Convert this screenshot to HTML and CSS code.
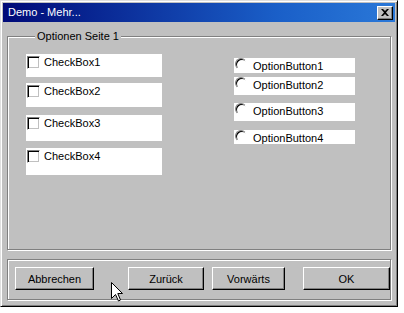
FILE: index.html
```html
<!DOCTYPE html>
<html>
<head>
<meta charset="utf-8">
<link rel="stylesheet" href="styles.css">
</head>
<body>
<div class="window">
  <div class="titlebar">
    <span class="title">Demo - Mehr...</span>
    <span class="close">
      <svg width="8" height="7" viewBox="0 0 8 7"><path d="M0 0h2l2 2 2-2h2L5 3.5 8 7H6L4 5 2 7H0l3-3.5z" fill="#000"/></svg>
    </span>
  </div>
  <div class="client">
    <fieldset class="group">
      <legend>Optionen Seite 1</legend>
      <div class="cols">
        <div class="col-left">
          <div class="cb h1"><span class="box"></span><span class="lbl">CheckBox1</span></div>
          <div class="cb h2"><span class="box"></span><span class="lbl">CheckBox2</span></div>
          <div class="cb h3"><span class="box"></span><span class="lbl">CheckBox3</span></div>
          <div class="cb h4"><span class="box"></span><span class="lbl">CheckBox4</span></div>
        </div>
        <div class="col-right">
          <div class="ob o1"><span class="radio"></span><span class="lbl">OptionButton1</span></div>
          <div class="ob o2"><span class="radio"></span><span class="lbl">OptionButton2</span></div>
          <div class="ob o3"><span class="radio"></span><span class="lbl">OptionButton3</span></div>
          <div class="ob o4"><span class="radio"></span><span class="lbl">OptionButton4</span></div>
        </div>
      </div>
    </fieldset>
    <div class="buttons">
      <button class="btn b-cancel">Abbrechen</button>
      <button class="btn b-back">Zurück</button>
      <button class="btn b-next">Vorwärts</button>
      <button class="btn b-ok">OK</button>
    </div>
  </div>
  <svg class="cursor" width="13" height="20" viewBox="0 0 13 20"><path d="M0.5 0.5V16.5L4.5 12.5L7.5 19L9.5 18L6.8 11.5H11.5Z" fill="#fff" stroke="#000" stroke-width="1" stroke-linejoin="miter"/></svg>
</div>
</body>
</html>
```
FILE: styles.css
```css
html, body {
  margin: 0;
  padding: 0;
  background: #fff;
}
body {
  font-family: "Liberation Sans", Arial, sans-serif;
  font-size: 11px;
  color: #000;
}
.window {
  position: relative;
  box-sizing: border-box;
  width: 398px;
  height: 307px;
  background: #c0c0c0;
  border: 1px solid;
  border-color: #dfdfdf #000 #000 #dfdfdf;
  box-shadow: inset 1px 1px #fff, inset -1px -1px #808080;
  padding: 2px;
  display: flex;
  flex-direction: column;
}
.titlebar {
  height: 19px;
  background: linear-gradient(to right, #000a78, #1a5fc8 70%, #2a78d8);
  display: flex;
  align-items: center;
  justify-content: space-between;
  padding: 0 2px 0 5px;
}
.title {
  color: #fff;
  font-size: 11px;
  line-height: 13px;
}
.close {
  box-sizing: border-box;
  width: 16px;
  height: 14px;
  background: #c0c0c0;
  border: 1px solid;
  border-color: #fff #000 #000 #fff;
  box-shadow: inset -1px -1px #808080;
  display: flex;
  align-items: center;
  justify-content: center;
}
.close svg { display: block; }
.client {
  flex: 1;
  display: flex;
  flex-direction: column;
  padding: 0 4px;
}
.group {
  margin: 8px 0 0 0;
  padding: 11px 0 0 18px;
  height: 220px;
  box-sizing: border-box;
  border: 1px solid #808080;
  box-shadow: inset 1px 1px #fff, 1px 1px #fff;
  min-width: 0;
}
.group legend {
  padding: 0 2px;
  margin-left: 9px;
  line-height: 13px;
  background: #c0c0c0;
}
.cols {
  display: flex;
  gap: 72px;
}
.col-left {
  width: 136px;
  display: flex;
  flex-direction: column;
}
.col-right {
  width: 121px;
  display: flex;
  flex-direction: column;
  padding-top: 4px;
}
.cb, .ob {
  background: #fff;
  display: flex;
  align-items: flex-start;
}
.cb { padding: 2px 0 0 1px; box-sizing: border-box; }
.h1 { height: 23px; }
.h2 { height: 24px; margin-top: 6px; }
.h3 { height: 26px; margin-top: 8px; }
.h4 { height: 27px; margin-top: 7px; }
.box {
  box-sizing: border-box;
  width: 13px;
  height: 13px;
  border: 1px solid;
  border-color: #808080 #fff #fff #808080;
  box-shadow: inset 1px 1px #000, inset -1px -1px #c0c0c0;
  background: #fff;
  flex: none;
}
.cb .lbl {
  margin-left: 4px;
  line-height: 13px;
  font-size: 11px;
}
.ob { box-sizing: border-box; padding-left: 1px; }
.o1 { height: 15px; }
.o2 { height: 18px; margin-top: 4px; }
.o3 { height: 18px; margin-top: 8px; }
.o4 { height: 14px; margin-top: 9px; }
.radio {
  box-sizing: border-box;
  width: 12px;
  height: 12px;
  border-radius: 50%;
  border: 1px solid;
  border-color: #808080 #fff #fff #808080;
  box-shadow: inset 1px 1px #000;
  background: #fff;
  flex: none;
}
.ob .lbl {
  margin-left: 6px;
  margin-top: 2px;
  line-height: 13px;
}
.buttons {
  margin-top: 9px;
  height: 41px;
  box-sizing: border-box;
  border: 1px solid #808080;
  box-shadow: inset 1px 1px #fff, 1px 1px #fff;
  display: flex;
  align-items: flex-start;
  padding: 7px 0 0 7px;
}
.btn {
  box-sizing: border-box;
  height: 23px;
  font-family: "Liberation Sans", Arial, sans-serif;
  font-size: 11px;
  color: #000;
  background: #c0c0c0;
  border: 1px solid;
  border-color: #fff #000 #000 #fff;
  box-shadow: inset -1px -1px #808080;
  padding: 0;
  margin: 0;
}
.b-cancel { width: 79px; }
.b-back { width: 76px; margin-left: 34px; }
.b-next { width: 73px; margin-left: 8px; }
.b-ok { width: 87px; margin-left: 18px; }
.cursor {
  position: absolute;
  left: 110px;
  top: 281px;
}
```
